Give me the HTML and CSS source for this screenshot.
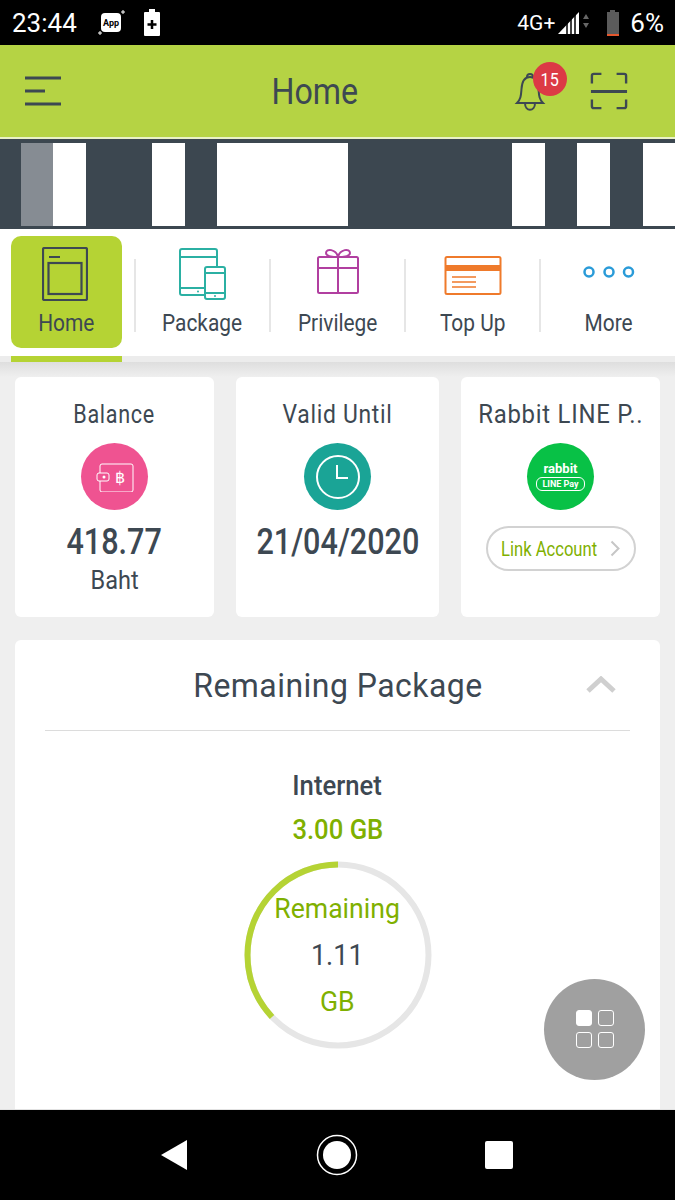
FILE: index.html
```html
<!DOCTYPE html>
<html lang="en">
<head>
    <meta charset="UTF-8">
    <meta name="viewport" content="width=device-width, initial-scale=1.0">
    <title>Home</title>
    <link rel="stylesheet" href="styles.css">
</head>
<body>
    <div class="status-bar">
        <div class="status-left">
            <span class="clock">23:44</span>
            <svg width="28" height="28" viewBox="0 0 28 28"><rect x="3" y="4" width="20" height="19" rx="4" fill="#fff"/><path d="M25 1v4M23 3h4M2 22v4M0 24h4" stroke="#fff" stroke-width="1"/><text x="13" y="17" class="app-text">App</text></svg>
            <svg width="18" height="28" viewBox="0 0 18 28"><path d="M6 0h6v3h4a1 1 0 0 1 1 1v22a1 1 0 0 1-1 1H2a1 1 0 0 1-1-1V4a1 1 0 0 1 1-1h4z" fill="#fff"/><path d="M9 11v9M4.500 15.500h9" stroke="#000" stroke-width="2.500"/></svg>
        </div>
        <div class="status-right">
            <span class="net">4G+</span>
            <svg width="34" height="26" viewBox="0 0 34 26"><path d="M1 24L22 2v22z" fill="#fff"/><path d="M10 24v-12M14 24V8M18 24V5" stroke="#000" stroke-width="1.500"/><path d="M26 9l3-5 3 5zM26 13l3 5 3-5z" fill="#666"/></svg>
            <svg class="batt" width="14" height="26" viewBox="0 0 14 26"><path d="M4 0h5v2h4v24H1V2h3z" fill="#5b5b5b"/><rect x="1" y="24" width="12" height="2" fill="#e4572e"/></svg>
            <span class="pct">6%</span>
        </div>
    </div>

    <header class="app-header">
        <svg class="menu-icon" width="38" height="30" viewBox="0 0 38 30"><path d="M1 2h36M1 15h20M1 28h36" stroke="#3d4852" stroke-width="3"/></svg>
        <h1><span>Home</span></h1>
        <div class="bell">
            <svg width="34" height="44" viewBox="0 0 34 44"><path d="M4 34c4-4 4-8 4.500-14C9 12 12 8 17 8s8 4 8.500 12c.5 6 .5 10 4.500 14z" fill="none" stroke="#3d4852" stroke-width="2"/><path d="M12 34c0 9 10 9 10 0M14 8c0-4 6-4 6 0" fill="none" stroke="#3d4852" stroke-width="2"/></svg>
            <span class="badge"><span>15</span></span>
        </div>
        <svg class="scan-icon" width="38" height="38" viewBox="0 0 40 40"><path d="M2 12V4a2 2 0 0 1 2-2h8M28 2h8a2 2 0 0 1 2 2v8M2 29v7a2 2 0 0 0 2 2h8M28 38h8a2 2 0 0 0 2-2v-7" fill="none" stroke="#3d4852" stroke-width="2.500"/><path d="M1 20.500h38" stroke="#3d4852" stroke-width="3"/></svg>
    </header>

    <div class="banner">
        <div class="block block-first"></div>
        <div class="block block-second"></div>
        <div class="block block-wide"></div>
        <div class="block block-far"></div>
        <div class="block block-next"></div>
        <div class="block block-last"></div>
    </div>

    <nav class="tabs">
        <div class="tab active">
            <svg width="46" height="54" viewBox="0 0 46 54"><rect x="1" y="1" width="44" height="52" rx="1.500" fill="none" stroke="#3d4852" stroke-width="2.200"/><path d="M7 10h11" stroke="#3d4852" stroke-width="2"/><rect x="6.500" y="16" width="33" height="31" fill="none" stroke="#3d4852" stroke-width="2.200"/></svg>
            <span>Home</span>
        </div>
        <div class="tab">
            <svg width="48" height="54" viewBox="0 0 48 54"><g fill="none" stroke="#2bb0a3" stroke-width="2"><path d="M27 48H4a2 2 0 0 1-2-2V4a2 2 0 0 1 2-2h33a2 2 0 0 1 2 2v16M2 10h37M2 41h25"/><rect x="27" y="20" width="20" height="32" rx="2"/><path d="M27 26h20M27 46h20"/></g><circle cx="20" cy="44.500" r="1" fill="#2bb0a3"/><circle cx="37" cy="49" r="1" fill="#2bb0a3"/></svg>
            <span>Package</span>
        </div>
        <div class="tab">
            <svg width="44" height="54" viewBox="0 0 44 54"><g fill="none" stroke="#b13fa0" stroke-width="2"><rect x="2" y="10" width="40" height="36" rx="1.500"/><path d="M2 21h40M22 10v36"/><path d="M22 10c-2-8-12-9-12-4 0 3 6 4 12 4zM22 10c2-8 12-9 12-4 0 3-6 4-12 4z"/></g></svg>
            <span>Privilege</span>
        </div>
        <div class="tab">
            <svg width="58" height="54" viewBox="0 0 58 54"><g fill="none" stroke="#ef7a2b"><rect x="1.500" y="10" width="55" height="37" rx="1.500" stroke-width="2"/><path d="M1 21h56" stroke-width="6"/><path d="M8 30h24M8 35h24M8 40h24" stroke-width="1.500"/></g></svg>
            <span>Top Up</span>
        </div>
        <div class="tab">
            <svg width="54" height="54" viewBox="0 0 54 54"><g fill="none" stroke="#2a9bd8" stroke-width="2.500"><circle cx="7" cy="25" r="4.500"/><circle cx="27" cy="25" r="4.500"/><circle cx="46.500" cy="25" r="4.500"/></g></svg>
            <span>More</span>
        </div>
    </nav>
    <div class="tab-shadow"><div class="tab-marker"></div></div>

    <main class="content">
        <div class="cards">
            <section class="card">
                <h3>Balance</h3>
                <div class="circle pink">
                    <svg width="38" height="30" viewBox="0 0 38 30"><g fill="none" stroke="#fff" stroke-width="1"><path d="M4 11V4a2 2 0 0 1 2-2h29a2 2 0 0 1 2 2v24a2 2 0 0 1-2 2H6a2 2 0 0 1-2-2v-9"/><rect x="1" y="11" width="12" height="8" rx="2"/></g><circle cx="8" cy="15" r="1.500" fill="#fff"/><text x="24" y="21" class="baht-sign">฿</text></svg>
                </div>
                <p class="value">418.77</p>
                <p class="unit">Baht</p>
            </section>
            <section class="card mid">
                <h3>Valid Until</h3>
                <div class="circle teal">
                    <svg width="46" height="46" viewBox="0 0 46 46"><circle cx="23" cy="23" r="21" fill="none" stroke="#fff" stroke-width="2"/><path d="M22 11v13h11" fill="none" stroke="#fff" stroke-width="2"/></svg>
                </div>
                <p class="value">21/04/2020</p>
            </section>
            <section class="card">
                <h3>Rabbit LINE P..</h3>
                <div class="circle line-green">
                    <span class="rabbit">rabbit</span>
                    <span class="line-pay">LINE Pay</span>
                </div>
                <a class="link-btn"><span>Link Account</span>
                    <svg width="11" height="17" viewBox="0 0 11 17"><path d="M1.500 1.500l7 7-7 7" fill="none" stroke="#c6c6c6" stroke-width="2"/></svg>
                </a>
            </section>
        </div>

        <section class="panel">
            <div class="panel-head">
                <h2>Remaining Package</h2>
                <svg width="30" height="17" viewBox="0 0 30 17"><path d="M2 15L15 3l13 12" fill="none" stroke="#cfcfcf" stroke-width="5"/></svg>
            </div>
            <h4>Internet</h4>
            <p class="quota">3.00 GB</p>
            <div class="gauge">
                <svg width="188" height="188" viewBox="0 0 188 188"><circle cx="94" cy="94" r="90.500" fill="none" stroke="#e6e6e6" stroke-width="6"/><circle cx="94" cy="94" r="90.500" fill="none" stroke="#b5d334" stroke-width="6" pathLength="100" stroke-dasharray="37 63" transform="rotate(-90 94 94) matrix(1 0 0 -1 0 188)"/></svg>
                <span class="gauge-label">Remaining</span>
                <span class="gauge-num">1.11</span>
                <span class="gauge-label">GB</span>
            </div>
        </section>

        <button class="fab">
            <span class="square filled"></span><span class="square"></span><span class="square"></span><span class="square"></span>
        </button>
    </main>

    <footer class="nav-bar">
        <svg width="28" height="32" viewBox="0 0 28 32"><path d="M27 1v30L1 16z" fill="#fff"/></svg>
        <svg width="42" height="42" viewBox="0 0 42 42"><circle cx="21" cy="21" r="19.500" fill="none" stroke="#fff" stroke-width="1.500"/><circle cx="21" cy="21" r="14" fill="#fff"/></svg>
        <svg width="28" height="28" viewBox="0 0 28 28"><rect width="28" height="28" rx="2" fill="#fff"/></svg>
    </footer>
</body>
</html>
```

FILE: styles.css
```css
* {
    box-sizing: border-box;
}
body {
    font-family: "Roboto", sans-serif;
    margin: 0;
    width: 675px;
    height: 1200px;
    overflow: hidden;
    display: flex;
    flex-direction: column;
    background-color: #efefef;
    color: #3d4852;
}
h1, h2, h3, h4, p {
    margin: 0;
    font-weight: normal;
}

/* status bar */
.status-bar {
    height: 45px;
    background: #000;
    color: #fff;
    display: flex;
    justify-content: space-between;
    align-items: center;
    padding: 0 11px 0 12px;
    flex-shrink: 0;
}
.status-left, .status-right {
    display: flex;
    align-items: center;
}
.clock {
    font-size: 26px;
    margin-right: 21px;
}
.status-left svg:last-child {
    margin-left: 17px;
}
.app-text {
    font-size: 9px;
    font-weight: bold;
    text-anchor: middle;
    fill: #000;
}
.net {
    font-size: 21px;
    margin-right: 2px;
}
.batt {
    margin: 0 10px 0 15px;
}
.pct {
    font-size: 26px;
}

/* header */
.app-header {
    height: 94px;
    background: #b5d344;
    border-bottom: 2px solid #e9f1c6;
    display: flex;
    align-items: center;
    position: relative;
    padding: 0 47px 0 24px;
    flex-shrink: 0;
}
.app-header h1 {
    flex: 1;
    text-align: center;
    font-size: 37px;
    padding-left: 54px;
}
.app-header h1 span {
    display: inline-block;
    transform: scaleX(0.87);
}
.bell {
    position: relative;
    width: 34px;
    height: 44px;
    margin-right: 43px;
}
.badge {
    position: absolute;
    left: 20px;
    top: -7px;
    width: 34px;
    height: 34px;
    border-radius: 50%;
    background: #dc3a45;
    color: #fff;
    font-size: 19px;
    display: flex;
    align-items: center;
    justify-content: center;
}
.badge span {
    transform: scaleX(0.85);
}

/* banner */
.banner {
    height: 90px;
    background: #3c4750;
    display: flex;
    padding: 4px 0 3px 21px;
    overflow: hidden;
    flex-shrink: 0;
}
.block {
    background: #fff;
    width: 33px;
    flex-shrink: 0;
}
.block-first {
    width: 65px;
    background: linear-gradient(to right, #868c93 32px, #fff 32px);
}
.block-second {
    margin-left: 66px;
}
.block-wide {
    width: 131px;
    margin-left: 32px;
}
.block-far {
    margin-left: 164px;
}
.block-next {
    margin-left: 32px;
}
.block-last {
    margin-left: 33px;
}

/* tabs */
.tabs {
    height: 127px;
    background: #fff;
    display: flex;
    flex-shrink: 0;
}
.tab {
    flex: 0 0 135px;
    display: flex;
    flex-direction: column;
    align-items: center;
    padding-top: 18px;
    font-size: 24px;
    position: relative;
}
.tab:first-child {
    padding-right: 3px;
}
.tab:nth-child(2) {
    padding-right: 1px;
}
.tab:last-child {
    padding-left: 2px;
}
.tab svg {
    height: 54px;
}
.tab.active svg {
    margin-right: 3px;
}
.tab span {
    margin-top: 8px;
    transform: scaleX(0.87);
}
.tab + .tab::before {
    content: "";
    position: absolute;
    left: -1px;
    top: 30px;
    height: 73px;
    width: 2px;
    background: #e6e6e6;
}
.tab.active::after {
    content: "";
    position: absolute;
    left: 11px;
    top: 7px;
    width: 111px;
    height: 112px;
    border-radius: 10px;
    background: #b5d334;
    z-index: 0;
}
.tab.active svg, .tab.active span {
    position: relative;
    z-index: 1;
}
.tab-shadow {
    height: 21px;
    background: linear-gradient(#ececec 6px, #dedede 6px, #efefef);
    flex-shrink: 0;
}
.tab-marker {
    margin-left: 11px;
    width: 111px;
    height: 6px;
    background: #b5d334;
}

/* content */
.content {
    flex: 1;
    position: relative;
    padding: 0 15px;
    overflow: hidden;
}
.cards {
    display: flex;
    gap: 22px;
    height: 240px;
}
.card {
    width: 199px;
    flex-shrink: 0;
    background: #fff;
    border-radius: 6px;
    display: flex;
    flex-direction: column;
    align-items: center;
    padding-top: 22px;
}
.card.mid {
    width: 203px;
}
.card h3 {
    font-size: 26px;
    line-height: 30px;
    white-space: nowrap;
    letter-spacing: 0.8px;
    transform: scaleX(0.88);
}
.card:first-child h3 {
    transform: scaleX(0.83);
}
.card:last-child h3 {
    transform: scaleX(0.92);
}
.circle {
    width: 67px;
    height: 67px;
    border-radius: 50%;
    margin-top: 14px;
    display: flex;
    flex-direction: column;
    align-items: center;
    justify-content: center;
    color: #fff;
}
.pink {
    background: #ef5391;
}
.teal {
    background: #1aa496;
}
.line-green {
    background: #08c146;
}
.baht-sign {
    font-family: "DejaVu Sans", sans-serif;
    font-size: 16px;
    text-anchor: middle;
    fill: #fff;
}
.rabbit {
    font-size: 13px;
    font-weight: bold;
    line-height: 14px;
}
.line-pay {
    font-size: 9px;
    font-weight: bold;
    line-height: 10px;
    border: 1px solid #fff;
    border-radius: 6px;
    padding: 1px 5px;
    margin-top: 1px;
    white-space: nowrap;
}
.value {
    font-size: 36px;
    font-weight: 500;
    line-height: 42px;
    margin-top: 11px;
    transform: scaleX(0.85);
}
.unit {
    font-size: 25px;
    line-height: 30px;
    margin-top: 3px;
    transform: scaleX(0.94);
}
.link-btn {
    width: 150px;
    height: 45px;
    margin-top: 16px;
    border: 2px solid #d2d2d2;
    border-radius: 23px;
    color: #7fb000;
    font-size: 20px;
    display: flex;
    align-items: center;
    justify-content: space-between;
    padding: 0 13px;
    white-space: nowrap;
}
.link-btn span {
    transform: scaleX(0.83);
    transform-origin: left center;
    margin-right: -16px;
}
.link-btn svg {
    flex-shrink: 0;
}
.panel {
    margin-top: 23px;
    background: #fff;
    border-radius: 6px 6px 0 0;
    height: 480px;
    display: flex;
    flex-direction: column;
    align-items: center;
    padding: 0 30px;
}
.panel-head {
    width: 100%;
    height: 91px;
    border-bottom: 1px solid #dcdcdc;
    display: flex;
    align-items: center;
    justify-content: center;
    position: relative;
}
.panel-head h2 {
    font-size: 34px;
    letter-spacing: 0.5px;
    transform: scaleX(0.94);
}
.panel-head svg {
    position: absolute;
    right: 14px;
    top: 36px;
}
.panel h4 {
    font-size: 27px;
    font-weight: 500;
    line-height: 32px;
    margin-top: 39px;
    transform: scaleX(0.95);
}
.quota {
    color: #7fb000;
    font-size: 27px;
    font-weight: 500;
    line-height: 32px;
    margin-top: 12px;
    transform: scaleX(0.95);
}
.gauge {
    position: relative;
    width: 188px;
    height: 188px;
    margin-top: 15px;
    display: flex;
    flex-direction: column;
    align-items: center;
    padding-top: 30px;
}
.gauge svg {
    position: absolute;
    left: 0;
    top: 0;
}
.gauge-label {
    color: #7fb000;
    font-size: 28px;
    line-height: 36px;
    transform: scaleX(0.95);
}
.gauge-num {
    font-size: 30px;
    line-height: 36px;
    margin: 10px 0 11px;
    transform: scaleX(0.9);
}
.fab {
    position: absolute;
    left: 544px;
    top: 602px;
    width: 101px;
    height: 101px;
    border-radius: 50%;
    border: 0;
    padding: 0 0 2px;
    background: #a0a0a0;
    display: grid;
    grid-template-columns: 16px 16px;
    grid-auto-rows: 16px;
    gap: 6px;
    justify-content: center;
    align-content: center;
}
.square {
    border: 1.5px solid #fff;
    border-radius: 3px;
}
.square.filled {
    background: #fff;
}

/* android nav */
.nav-bar {
    height: 91px;
    background: #000;
    border-top: 1px solid #e2e2e2;
    display: flex;
    align-items: center;
    justify-content: space-between;
    padding: 0 162px 0 160px;
    flex-shrink: 0;
}
```
